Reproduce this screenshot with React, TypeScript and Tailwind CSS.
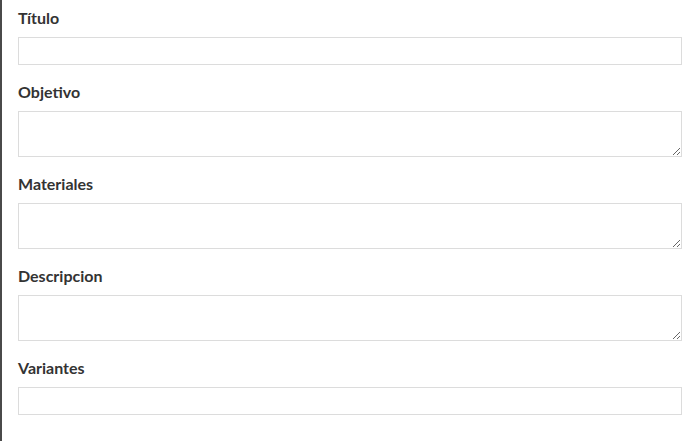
import React from "react";

const fields: { label: string; type: "input" | "textarea" }[] = [
  { label: "Título", type: "input" },
  { label: "Objetivo", type: "textarea" },
  { label: "Materiales", type: "textarea" },
  { label: "Descripcion", type: "textarea" },
  { label: "Variantes", type: "input" },
];

export default function App() {
  return (
    <div className="w-[700px] h-[441px] bg-white border-l-2 border-[#4a4a4a] pl-4 pr-[18px] pt-2 overflow-hidden" style={{ fontFamily: "Lato, 'Open Sans', sans-serif" }}>
      <form className="flex flex-col gap-[17px]">
        {fields.map((f) => (
          <div key={f.label} className="flex flex-col">
            <label className="block text-[16px] leading-5 font-bold text-[#333333] mb-[9px]">{f.label}</label>
            {f.type === "input" ? (
              <input type="text" className="block w-full h-[28px] border border-[#dcdcdc] bg-white outline-none" />
            ) : (
              <textarea className="block w-full h-[46px] border border-[#dcdcdc] bg-white outline-none resize-y" />
            )}
          </div>
        ))}
      </form>
    </div>
  );
}
